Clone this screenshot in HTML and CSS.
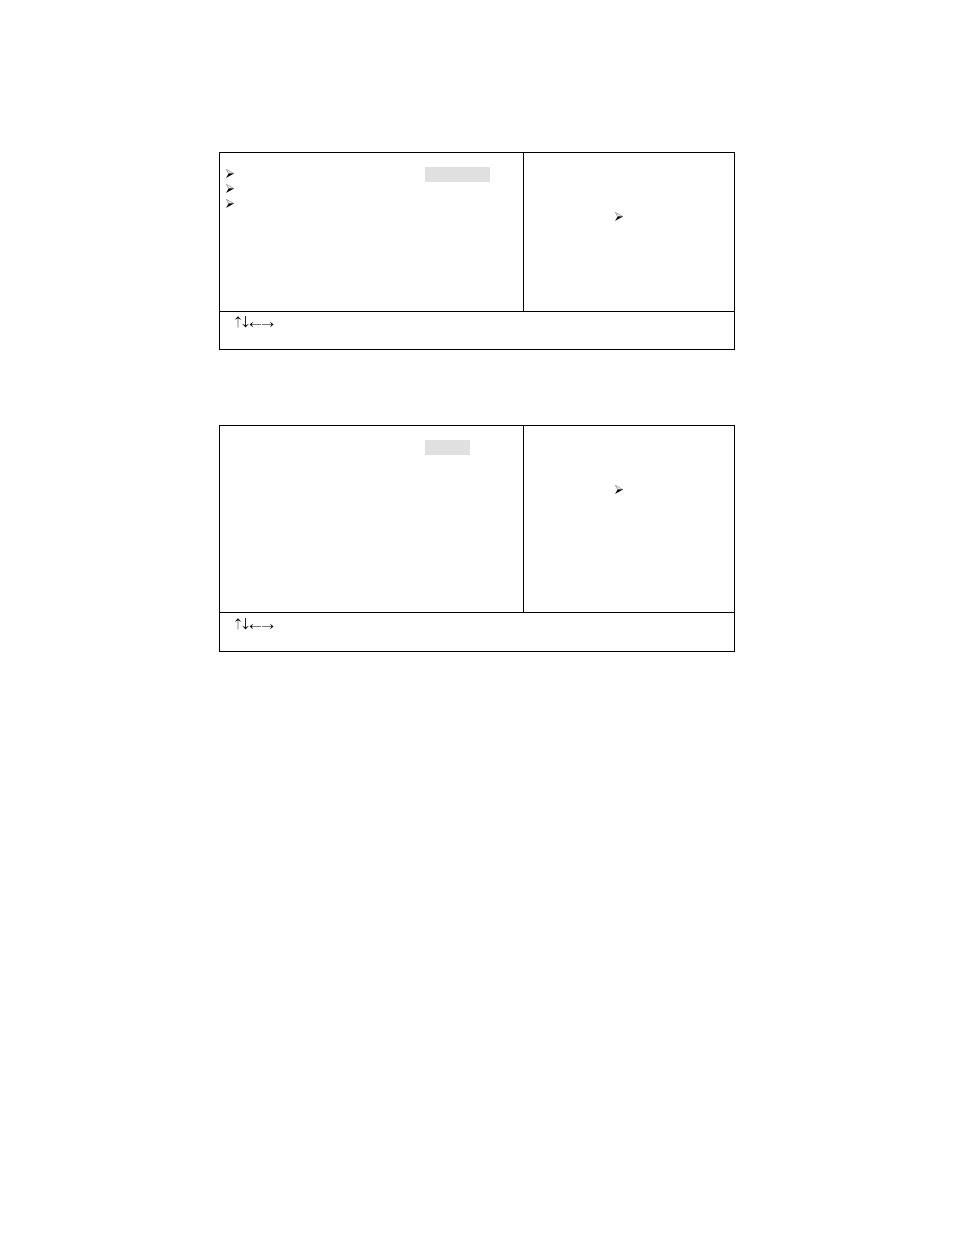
FILE: index.html
```html
<!DOCTYPE html>
<html lang="en">
<head>
<meta charset="utf-8">
<title>Setup screens</title>
<link rel="stylesheet" href="styles.css">
</head>
<body>
<svg class="symbols" aria-hidden="true">
  <symbol id="pointer" viewBox="0 0 8 9">
    <path d="M.3 .3L7.8 4.5H2.6Z" fill="#eee" stroke="#777" stroke-width=".6"/>
    <path d="M2.6 4.4H8L0 9Z" fill="#000"/>
  </symbol>
  <symbol id="arrows" viewBox="0 0 39 12">
    <g fill="none" stroke="#000">
      <path stroke="#888" d="M3 1V11.5"/>
      <path stroke="#222" d="M10.5 0V11"/>
      <path stroke="#777" d="M15.5 8.5H26M27 8.5H38"/>
    </g>
    <g fill="#000">
      <path d="M3 .2L6.4 4L3 2.2L-.4 4Z"/>
      <path d="M10.5 11.6L7 7.4L10.5 9.6L14 7.4Z"/>
      <path d="M14.6 8.5L18.4 5.4L16.6 8.5L18.4 11.6Z"/>
      <path d="M38.6 8.5L34.8 5.4L36.6 8.5L34.8 11.6Z"/>
    </g>
  </symbol>
</svg>
<main class="page">
  <section class="panel panel-short">
    <div class="options">
      <ul class="pointers">
        <li><svg class="pointer"><use href="#pointer"/></svg></li>
        <li><svg class="pointer"><use href="#pointer"/></svg></li>
        <li><svg class="pointer"><use href="#pointer"/></svg></li>
      </ul>
      <div class="value value-wide"></div>
    </div>
    <div class="help"><svg class="pointer"><use href="#pointer"/></svg></div>
    <div class="keys"><svg class="arrows" role="img" aria-label="Arrow keys"><use href="#arrows"/></svg></div>
  </section>
  <section class="panel panel-tall">
    <div class="options">
      <div class="pointers"></div>
      <div class="value"></div>
    </div>
    <div class="help"><svg class="pointer"><use href="#pointer"/></svg></div>
    <div class="keys"><svg class="arrows" role="img" aria-label="Arrow keys"><use href="#arrows"/></svg></div>
  </section>
</main>
</body>
</html>
```
FILE: styles.css
```css
* {
  box-sizing: border-box;
}

body {
  margin: 0;
  background: #fff;
  color: #000;
  font-family: "Liberation Serif", serif;
}

.symbols {
  display: none;
}

.page {
  display: flex;
  flex-direction: column;
  gap: 75px;
  max-width: 516px;
  margin: 0 auto;
  padding: 152px 0;
}

.panel {
  display: grid;
  grid-template-columns: 303fr 211fr;
  border: 1px solid #000;
}

.panel-short {
  grid-template-rows: minmax(158px, auto) minmax(38px, auto);
}

.panel-tall {
  grid-template-rows: minmax(186px, auto) minmax(39px, auto);
}

.options {
  display: grid;
  grid-template-columns: 205fr 98fr;
  padding-top: 14px;
}

.pointers {
  display: flex;
  flex-direction: column;
  gap: 6px;
  margin: 0;
  padding: 2px 6px;
  list-style: none;
}

.pointers li {
  display: flex;
}

.pointer {
  display: block;
  width: 8px;
  height: 9px;
}

.value {
  width: 45px;
  height: 15px;
  background: #e0e0e0;
}

.value-wide {
  width: 65px;
}

.help {
  border-left: 1px solid #000;
  padding: 59px 0 0 91px;
}

.keys {
  grid-column: 1 / -1;
  border-top: 1px solid #000;
  padding: 4px 15px;
}

.panel-tall .keys {
  padding-top: 5px;
}

.arrows {
  display: block;
  width: 39px;
  height: 12px;
}
```
